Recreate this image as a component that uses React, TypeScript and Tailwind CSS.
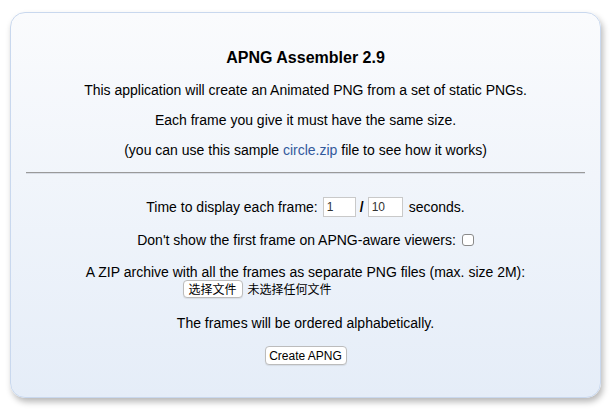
import React from "react";

export default function App() {
  const font = { fontFamily: '"Liberation Sans", Arial, sans-serif' };
  return (
    <div className="w-[612px] h-[411px] bg-white overflow-hidden pt-[12px] pl-[10px]" style={font}>
      <div className="w-[591px] h-[386px] rounded-[15px] border border-[#c9d8ee] bg-gradient-to-b from-[#fafbfd] to-[#e5edf8] shadow-[2px_4px_6px_rgba(0,0,0,0.28)] flex flex-col items-stretch text-[14px] text-black">
        <div className="mt-[35px] h-[19px] leading-[19px] text-center font-bold text-[16px]">APNG Assembler 2.9</div>
        <div className="mt-[15px] h-[16px] leading-[16px] text-center">This application will create an Animated PNG from a set of static PNGs.</div>
        <div className="mt-[14px] h-[16px] leading-[16px] text-center">Each frame you give it must have the same size.</div>
        <div className="mt-[14px] h-[16px] leading-[16px] text-center">
          (you can use this sample <span className="text-[#33599b]">circle.zip</span> file to see how it works)
        </div>
        <div className="mt-[14px] mx-[15px] h-[2px] border-t border-[#9a9a9a] border-b border-b-[#d8dde6]" />
        <div className="mt-[23px] h-[20px] flex items-center justify-center">
          <span>Time to display each frame:</span>
          <span className="ml-[5px] w-[33px] h-[20px] border border-[#c9c9c9] bg-white text-[12px] leading-[18px] pl-[3px] text-[#333]">1</span>
          <span className="mx-[4px] font-bold">/</span>
          <span className="w-[35px] h-[20px] border border-[#c9c9c9] bg-white text-[12px] leading-[18px] pl-[3px] text-[#333]">10</span>
          <span className="ml-[6px]">seconds.</span>
        </div>
        <div className="mt-[15px] h-[16px] flex items-center justify-center">
          <span>Don't show the first frame on APNG-aware viewers:</span>
          <span className="ml-[6px] w-[12px] h-[12px] rounded-[3px] border border-[#8a8a8a] bg-white" />
        </div>
        <div className="mt-[17px] h-[15px] leading-[15px] text-center">A ZIP archive with all the frames as separate PNG files (max. size 2M):</div>
        <div className="h-[18px] flex justify-center">
          <div className="w-[246px] flex items-center" style={{ fontFamily: '"Noto Sans CJK SC", sans-serif' }}>
            <span className="h-[18px] w-[60px] flex items-center justify-center rounded-[4px] border border-[#bcbcbc] bg-white text-[12px] leading-none shadow-[0_1px_1px_rgba(0,0,0,0.08)]">选择文件</span>
            <span className="ml-[5px] text-[12px] leading-none">未选择任何文件</span>
          </div>
        </div>
        <div className="mt-[17px] h-[16px] leading-[16px] text-center">The frames will be ordered alphabetically.</div>
        <div className="mt-[15px] flex justify-center">
          <span className="h-[19px] w-[82px] flex items-center justify-center rounded-[4px] border border-[#bcbcbc] bg-white text-[12px] leading-none shadow-[0_1px_1px_rgba(0,0,0,0.08)]">Create APNG</span>
        </div>
      </div>
    </div>
  );
}
